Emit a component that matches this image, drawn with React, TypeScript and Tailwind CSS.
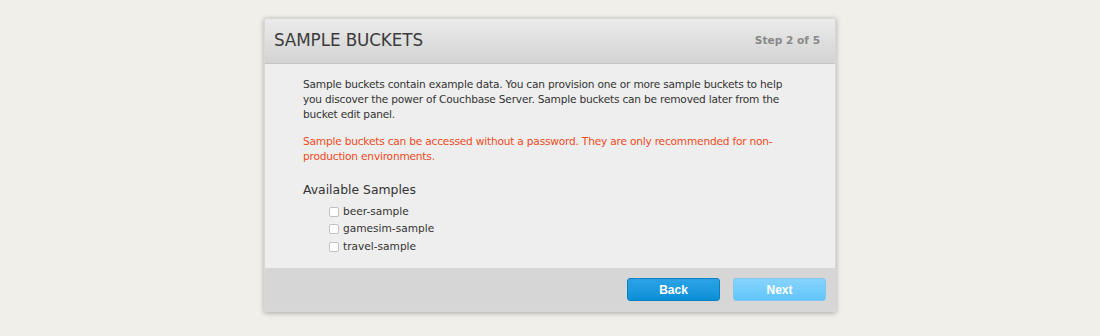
import React from 'react';

const samples = ['beer-sample', 'gamesim-sample', 'travel-sample'];

const App: React.FC = () => {
  return (
    <div className="w-full h-[336px] bg-[#f1efe9] pt-[18px]" style={{ fontFamily: '"DejaVu Sans", Verdana, sans-serif' }}>
      <div className="ml-[264px] w-[572px] shadow-[0_1px_5px_rgba(0,0,0,0.3)] border border-[#d8d8d8]">
        {/* Header */}
        <div className="h-[45px] flex items-center justify-between px-[9px] bg-gradient-to-b from-[#ebebeb] to-[#d3d3d3] border-b border-[#c4c4c4]">
          <h2 className="text-[16.8px] text-[#3b3b3b] tracking-[-0.1px]">SAMPLE BUCKETS</h2>
          <span className="text-[10.6px] font-bold text-[#888] pr-[6px]">Step 2 of 5</span>
        </div>

        {/* Body */}
        <div className="bg-[#eeeeee] pl-[38px] pr-[36px] pt-[13px] pb-[14px] h-[204px]">
          <p className="text-[10.6px] leading-[15px] text-[#333] tracking-[-0.2px]">
            Sample buckets contain example data. You can provision one or more sample buckets to help you discover the power of Couchbase Server. Sample buckets can be removed later from the bucket edit panel.
          </p>
          <p className="mt-[12px] text-[10.6px] leading-[15px] text-[#f1491b] tracking-[-0.2px]">
            Sample buckets can be accessed without a password. They are only recommended for non-production environments.
          </p>
          <h3 className="mt-[17px] text-[12.4px] text-[#333]">Available Samples</h3>
          <div className="mt-[6px] pl-[26px] flex flex-col gap-[5.5px]">
            {samples.map((s) => (
              <label key={s} className="flex items-center gap-[4px] text-[10.6px] text-[#333] h-[12px]">
                <span className="w-[10px] h-[10px] rounded-[2px] border border-[#c2c2c2] bg-white"></span>
                {s}
              </label>
            ))}
          </div>
        </div>

        {/* Footer */}
        <div className="h-[43px] bg-[#d6d6d6] flex items-center justify-end gap-[13px] pr-[9px]" style={{ fontFamily: '"Liberation Sans", Arial, sans-serif' }}>
          <button className="w-[93px] h-[23px] rounded-[3px] border border-[#0d7fc0] bg-gradient-to-b from-[#2ba3e6] to-[#0790d8] text-white text-[12px] font-bold">
            Back
          </button>
          <button className="w-[93px] h-[23px] rounded-[3px] border border-[#7cc8f0] bg-gradient-to-b from-[#86d4fc] to-[#60c5fb] text-white text-[12px] font-bold">
            Next
          </button>
        </div>
      </div>
    </div>
  );
};

export default App;
